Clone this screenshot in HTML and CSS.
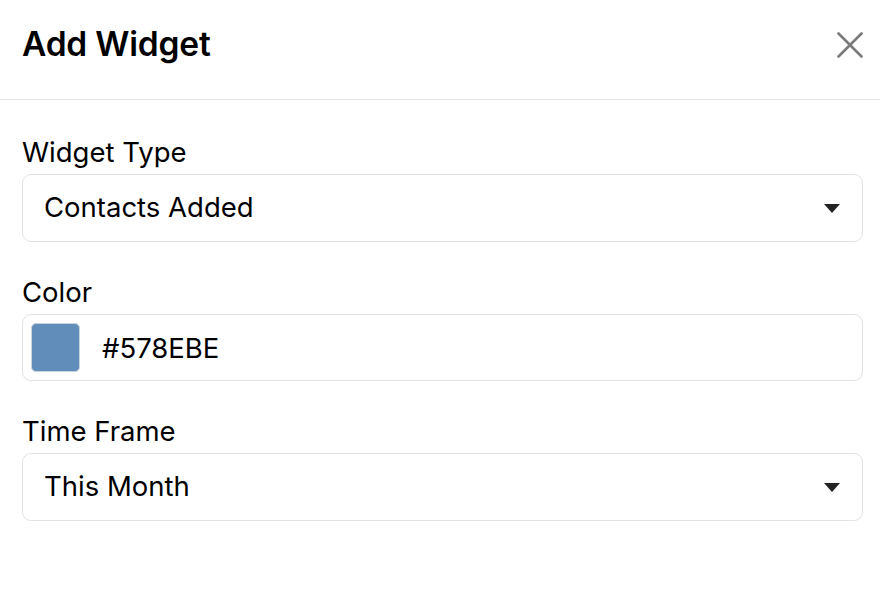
FILE: index.html
```html
<!DOCTYPE html>
<html lang="en">
<head>
<meta charset="utf-8">
<title>Add Widget</title>
<link rel="stylesheet" href="styles.css">
</head>
<body>
<div class="modal">
  <div class="modal-header">
    <h1 class="modal-title">Add Widget</h1>
    <button class="close-btn" aria-label="Close">
      <svg width="26" height="26" viewBox="0 0 26 26"><path d="M1.5 1.5 L24.5 24.5 M24.5 1.5 L1.5 24.5" stroke="#7a7a7a" stroke-width="2.6" stroke-linecap="round" fill="none"/></svg>
    </button>
  </div>
  <div class="modal-body">
    <div class="field">
      <div class="field-label">Widget Type</div>
      <div class="select-box">
        <span class="select-value">Contacts Added</span>
        <svg class="caret" width="16" height="9" viewBox="0 0 16 9"><path d="M0 0 H16 L8 9 Z" fill="#222"/></svg>
      </div>
    </div>
    <div class="field">
      <div class="field-label">Color</div>
      <div class="color-box">
        <span class="swatch"></span>
        <span class="color-value">#578EBE</span>
      </div>
    </div>
    <div class="field">
      <div class="field-label">Time Frame</div>
      <div class="select-box">
        <span class="select-value">This Month</span>
        <svg class="caret" width="16" height="9" viewBox="0 0 16 9"><path d="M0 0 H16 L8 9 Z" fill="#222"/></svg>
      </div>
    </div>
  </div>
</div>
</body>
</html>
```
FILE: styles.css
```css
html, body {
  margin: 0;
  padding: 0;
  background: #ffffff;
}
body {
  font-family: Inter, "Liberation Sans", Arial, sans-serif;
  color: #000000;
}
.modal {
  width: 880px;
}
.modal-header {
  display: flex;
  align-items: flex-start;
  justify-content: space-between;
  padding: 24px 17px 0 22px;
  height: 75px;
  border-bottom: 1px solid #e3e5e8;
}
.modal-title {
  margin: 0;
  font-size: 33.5px;
  font-weight: 600;
  line-height: 40px;
  letter-spacing: -0.2px;
}
.close-btn {
  margin-top: 8px;
  padding: 0;
  border: 0;
  background: none;
  width: 26px;
  height: 26px;
  display: flex;
}
.modal-body {
  padding: 37px 17px 0 22px;
  display: flex;
  flex-direction: column;
  gap: 35px;
}
.field {
  display: flex;
  flex-direction: column;
  gap: 7px;
}
.field-label {
  font-size: 27.5px;
  line-height: 30px;
}
.select-box {
  height: 66px;
  border: 1px solid #e2e2e2;
  border-radius: 9px;
  display: flex;
  align-items: center;
  justify-content: space-between;
  padding: 0 22px 0 21px;
}
.select-value {
  font-size: 27.5px;
  line-height: 30px;
  margin-top: -3px;
}
.color-box {
  height: 49px;
  border: 1px solid #e2e2e2;
  border-radius: 9px;
  padding: 8px;
  display: flex;
  align-items: center;
  gap: 22px;
}
.swatch {
  width: 47px;
  height: 47px;
  background: #618dbb;
  border: 1px solid #c9d3dd;
  border-radius: 5px;
}
.color-value {
  font-size: 27.5px;
  line-height: 30px;
}
```
